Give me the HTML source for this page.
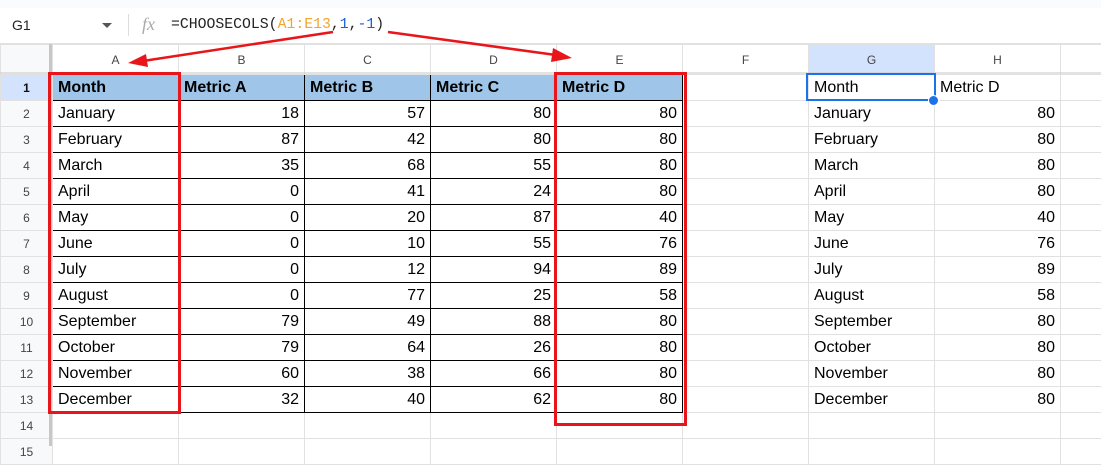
<!DOCTYPE html>
<html><head><meta charset="utf-8"><style>
body{margin:0;width:1101px;height:446px;overflow:hidden;background:#fff;font-family:"Liberation Sans",Arial,sans-serif;position:relative}
.top{position:absolute;left:0;top:0;width:1101px;height:8px;background:#f9fbfd}
.fb{position:absolute;left:0;top:8px;width:1101px;height:35px;background:#fff;border-bottom:1px solid #e1e1e1}
table{position:absolute;left:0;top:44px;border-collapse:collapse;table-layout:fixed;width:1186px}
td{border:1px solid #e1e1e1;height:26px;padding:1px 5px 0;font-size:16px;color:#000;white-space:nowrap;overflow:hidden;box-sizing:border-box}
tr.h td{height:30px;text-align:center;font-size:12px;color:#444;background:#fff}
td.rh{text-align:center;font-size:12px;color:#444;background:#f8f9fa;padding:0}
tr.h td.rh{background:#f8f9fa}
td.b{border:1px solid #000}
td.hd{background:#9fc5e8;font-weight:bold}
td.r{text-align:right}
.sel{background:#d3e3fd!important;}
</style></head><body>
<div class="top"></div>
<div class="fb">
<span style="position:absolute;left:12px;top:9px;font-size:14px;color:#222">G1</span>
<span style="position:absolute;left:102px;top:15px;width:0;height:0;border-left:5px solid transparent;border-right:5px solid transparent;border-top:5px solid #555"></span>
<span style="position:absolute;left:128px;top:6px;width:1px;height:22px;background:#ddd"></span>
<span style="position:absolute;left:142px;top:6px;font-family:'Liberation Serif',serif;font-style:italic;font-size:18px;color:#aaa">fx</span>
<span style="position:absolute;left:171px;top:9px;font-size:14.8px;font-family:'Liberation Mono',monospace;color:#222">=CHOOSECOLS(<span style="color:#f4a52b">A1:E13</span>,<span style="color:#1a5fd8">1</span>,<span style="color:#1a5fd8">-1</span>)</span>
</div>
<table>
<colgroup><col style="width:52px"><col style="width:126px"><col style="width:126px"><col style="width:126px"><col style="width:126px"><col style="width:126px"><col style="width:126px"><col style="width:126px"><col style="width:126px"><col style="width:126px"></colgroup>
<tr class="h"><td class="rh"></td><td>A</td><td>B</td><td>C</td><td>D</td><td>E</td><td>F</td><td class="sel">G</td><td>H</td><td></td></tr>
<tr><td class="rh sel" style="font-weight:bold;color:#111">1</td><td class="b hd">Month</td><td class="b hd">Metric A</td><td class="b hd">Metric B</td><td class="b hd">Metric C</td><td class="b hd">Metric D</td><td></td><td>Month</td><td>Metric D</td><td></td></tr>
<tr><td class="rh">2</td><td class="b">January</td><td class="b r">18</td><td class="b r">57</td><td class="b r">80</td><td class="b r">80</td><td></td><td>January</td><td class="r">80</td><td></td></tr>
<tr><td class="rh">3</td><td class="b">February</td><td class="b r">87</td><td class="b r">42</td><td class="b r">80</td><td class="b r">80</td><td></td><td>February</td><td class="r">80</td><td></td></tr>
<tr><td class="rh">4</td><td class="b">March</td><td class="b r">35</td><td class="b r">68</td><td class="b r">55</td><td class="b r">80</td><td></td><td>March</td><td class="r">80</td><td></td></tr>
<tr><td class="rh">5</td><td class="b">April</td><td class="b r">0</td><td class="b r">41</td><td class="b r">24</td><td class="b r">80</td><td></td><td>April</td><td class="r">80</td><td></td></tr>
<tr><td class="rh">6</td><td class="b">May</td><td class="b r">0</td><td class="b r">20</td><td class="b r">87</td><td class="b r">40</td><td></td><td>May</td><td class="r">40</td><td></td></tr>
<tr><td class="rh">7</td><td class="b">June</td><td class="b r">0</td><td class="b r">10</td><td class="b r">55</td><td class="b r">76</td><td></td><td>June</td><td class="r">76</td><td></td></tr>
<tr><td class="rh">8</td><td class="b">July</td><td class="b r">0</td><td class="b r">12</td><td class="b r">94</td><td class="b r">89</td><td></td><td>July</td><td class="r">89</td><td></td></tr>
<tr><td class="rh">9</td><td class="b">August</td><td class="b r">0</td><td class="b r">77</td><td class="b r">25</td><td class="b r">58</td><td></td><td>August</td><td class="r">58</td><td></td></tr>
<tr><td class="rh">10</td><td class="b">September</td><td class="b r">79</td><td class="b r">49</td><td class="b r">88</td><td class="b r">80</td><td></td><td>September</td><td class="r">80</td><td></td></tr>
<tr><td class="rh">11</td><td class="b">October</td><td class="b r">79</td><td class="b r">64</td><td class="b r">26</td><td class="b r">80</td><td></td><td>October</td><td class="r">80</td><td></td></tr>
<tr><td class="rh">12</td><td class="b">November</td><td class="b r">60</td><td class="b r">38</td><td class="b r">66</td><td class="b r">80</td><td></td><td>November</td><td class="r">80</td><td></td></tr>
<tr><td class="rh">13</td><td class="b">December</td><td class="b r">32</td><td class="b r">40</td><td class="b r">62</td><td class="b r">80</td><td></td><td>December</td><td class="r">80</td><td></td></tr>
<tr><td class="rh">14</td><td></td><td></td><td></td><td></td><td></td><td></td><td></td><td></td><td></td></tr>
<tr><td class="rh">15</td><td></td><td></td><td></td><td></td><td></td><td></td><td></td><td></td><td></td></tr>
</table>
<div style="position:absolute;left:49px;top:44px;width:3px;height:402px;background:#c7c7c7"></div>
<div style="position:absolute;left:0;top:72px;width:1101px;height:2px;background:#c7c7c7;opacity:0.5"></div>
<div style="position:absolute;left:806px;top:73px;width:126px;height:24px;border:2px solid #1a73e8"></div>
<div style="position:absolute;left:928px;top:95px;width:9px;height:9px;border-radius:50%;background:#1a73e8;border:1px solid #fff"></div>
<div style="position:absolute;left:48px;top:72px;width:127px;height:336px;border:3px solid #e8161b"></div>
<div style="position:absolute;left:554px;top:72px;width:127px;height:348px;border:3px solid #e8161b"></div>
<svg style="position:absolute;left:0;top:0" width="1101" height="446">
<line x1="333" y1="32" x2="143" y2="61" stroke="#e8161b" stroke-width="2.5"/>
<polygon points="128,63 146,54 148,67" fill="#e8161b"/>
<line x1="388" y1="32" x2="556" y2="55" stroke="#e8161b" stroke-width="2.5"/>
<polygon points="572,58 553,48 551,62" fill="#e8161b"/>
</svg>
</body></html>
